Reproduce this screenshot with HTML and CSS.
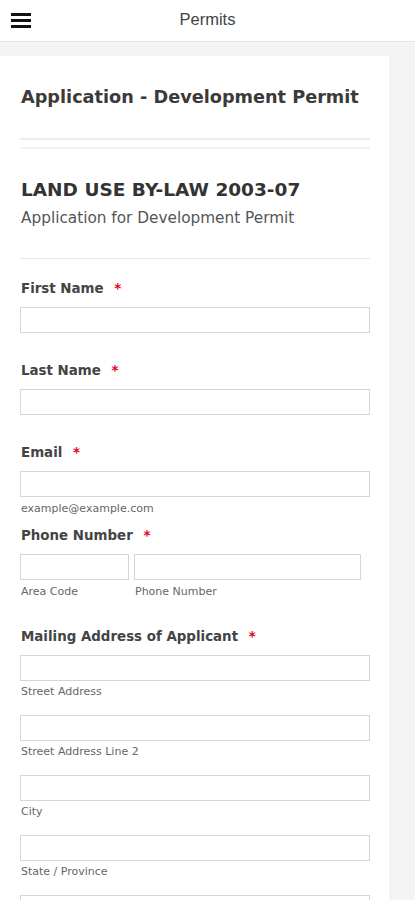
FILE: index.html
```html
<!DOCTYPE html>
<html lang="en">
<head>
<meta charset="utf-8">
<title>Permits</title>
<link rel="stylesheet" href="styles.css">
</head>
<body>
<header class="topbar">
  <button class="menu-btn" aria-label="Menu">
    <svg width="20" height="16" viewBox="0 0 20 16"><rect x="0" y="0" width="20" height="3" fill="#111"/><rect x="0" y="6" width="20" height="3" fill="#111"/><rect x="0" y="12" width="20" height="3" fill="#111"/></svg>
  </button>
  <div class="topbar-title">Permits</div>
</header>
<main class="page">
  <div class="card">
    <h1 class="form-title">Application - Development Permit</h1>
    <div class="double-rule"></div>
    <div class="section-head">
      <h2 class="section-title">LAND USE BY-LAW 2003-07</h2>
      <div class="section-sub">Application for Development Permit</div>
    </div>
    <div class="fields">
      <div class="field">
        <label class="label">First Name <span class="req">*</span></label>
        <input class="input" type="text">
      </div>
      <div class="field">
        <label class="label">Last Name <span class="req">*</span></label>
        <input class="input" type="text">
      </div>
      <div class="field field-tight">
        <label class="label">Email <span class="req">*</span></label>
        <input class="input" type="text">
        <div class="sublabel">example@example.com</div>
      </div>
      <div class="field">
        <label class="label">Phone Number <span class="req">*</span></label>
        <div class="phone-row">
          <div class="phone-area">
            <input class="input" type="text">
            <div class="sublabel">Area Code</div>
          </div>
          <div class="phone-num">
            <input class="input" type="text">
            <div class="sublabel">Phone Number</div>
          </div>
        </div>
      </div>
      <div class="field">
        <label class="label">Mailing Address of Applicant <span class="req">*</span></label>
        <div class="addr">
          <input class="input" type="text">
          <div class="sublabel">Street Address</div>
        </div>
        <div class="addr">
          <input class="input" type="text">
          <div class="sublabel">Street Address Line 2</div>
        </div>
        <div class="addr">
          <input class="input" type="text">
          <div class="sublabel">City</div>
        </div>
        <div class="addr">
          <input class="input" type="text">
          <div class="sublabel">State / Province</div>
        </div>
        <div class="addr">
          <input class="input" type="text">
        </div>
      </div>
    </div>
  </div>
</main>
</body>
</html>
```
FILE: styles.css
```css
* { box-sizing: border-box; }
html, body { margin: 0; padding: 0; }
body {
  background: #f4f4f4;
  font-family: "DejaVu Sans", "Liberation Sans", sans-serif;
  color: #333;
}
.topbar {
  position: relative;
  height: 42px;
  background: #fff;
  border-bottom: 1px solid #e4e4e4;
  display: flex;
  align-items: center;
  justify-content: center;
}
.menu-btn {
  position: absolute;
  left: 11px;
  top: 13px;
  padding: 0;
  border: 0;
  background: none;
  line-height: 0;
}
.topbar-title {
  font-family: "Liberation Sans", Arial, sans-serif;
  font-size: 16.5px;
  color: #444;
  margin-top: -3px;
}
.page {
  padding: 14px 26px 0 0;
}
.card {
  background: #fff;
  padding: 28px 19px 0 20px;
}
.form-title {
  margin: 0 0 0 1px;
  font-size: 17.7px;
  font-weight: bold;
  color: #3a3a3a;
  line-height: 26px;
}
.double-rule {
  margin-top: 28px;
  height: 11px;
  border-top: 2px solid #ececec;
  border-bottom: 2px solid #f2f2f2;
}
.section-head {
  padding: 28px 0 30px 1px;
  border-bottom: 1px solid #e8e8e8;
}
.section-title {
  margin: 0;
  font-size: 18.5px;
  font-weight: 600;
  color: #333;
  line-height: 26px;
}
.section-sub {
  margin-top: 5px;
  font-size: 15.3px;
  color: #555;
  line-height: 20px;
}
.fields { padding-top: 21px; }
.field { margin-bottom: 29px; }
.field-tight { margin-bottom: 11px; }
.label {
  display: block;
  margin-left: 1px;
  font-size: 13.4px;
  font-weight: bold;
  color: #444;
  line-height: 18px;
  margin-bottom: 9px;
}
.req { color: #e8001c; margin-left: 6px; }
.input {
  display: block;
  width: 100%;
  height: 26px;
  border: 1px solid #d6d6d6;
  background: #fff;
  margin: 0;
  padding: 0 4px;
}
.sublabel {
  margin-left: 1px;
  margin-top: 5px;
  font-size: 11px;
  color: #666;
  line-height: 14px;
}
.addr .sublabel { margin-top: 4px; }
.phone-row {
  display: flex;
  gap: 5px;
  padding-right: 9px;
}
.phone-area { width: 109px; flex: none; }
.phone-num { flex: 1; }
.addr { margin-bottom: 16px; }
```
